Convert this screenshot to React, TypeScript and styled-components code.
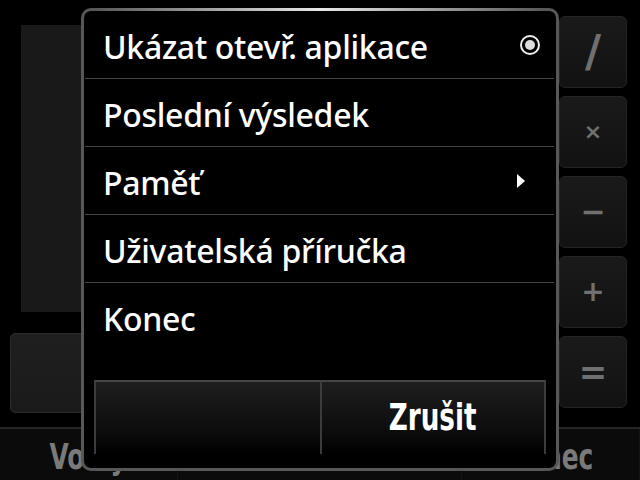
import styled, { createGlobalStyle } from 'styled-components';

const GlobalStyle = createGlobalStyle`
  html, body {
    margin: 0;
    padding: 0;
    background: #000;
  }
  * {
    box-sizing: border-box;
  }
`;

const Screen = styled.div`
  position: relative;
  width: 640px;
  height: 480px;
  overflow: hidden;
  background: #000;
  display: flex;
  flex-direction: column;
  font-family: "Noto Sans", "Open Sans", sans-serif;
`;

const Main = styled.div`
  flex: 1;
  display: flex;
`;

const LeftArea = styled.div`
  flex: 1;
  display: flex;
  flex-direction: column;
`;

const Display = styled.div`
  margin: 25px 20px 0 21px;
  height: 287px;
  background: #191919;
`;

const InputBox = styled.div`
  margin: 21px 20px 0 10px;
  height: 80px;
  border-radius: 5px;
  background: linear-gradient(#1f1f1f, #1a1a1a);
  border: 1px solid #2b2b2b;
`;

const OpsColumn = styled.div`
  display: flex;
  flex-direction: column;
  gap: 8px;
  padding-top: 16px;
  margin-right: 13px;
`;

const OpKey = styled.div<{ $size: number }>`
  width: 68px;
  height: 72px;
  border-radius: 6px;
  background: linear-gradient(#1a1a1a, #121212);
  border: 1px solid #242424;
  display: flex;
  align-items: center;
  justify-content: center;
  color: #707070;
  font-family: "DejaVu Sans", sans-serif;
  font-weight: bold;
  font-size: ${p => p.$size}px;
  line-height: 1;
`;

// the phone uses a narrow bold face for softkeys; squeeze a bold sans to match
const Narrow = styled.span`
  display: inline-block;
  transform: scaleX(0.69);
  font-family: "DejaVu Sans", sans-serif;
  font-weight: bold;
`;

const SoftkeyBar = styled.div`
  height: 53px;
  display: grid;
  grid-template-columns: 178px 1fr 178px;
  background: #0b0b0b;
  border-top: 2px solid #262626;
`;

const Softkey = styled.div`
  display: flex;
  align-items: center;
  justify-content: center;
  color: #7a7a7a;
  font-size: 36px;
  padding-top: 4px;
  border-right: 1px solid #151515;
`;

const Dialog = styled.div`
  position: absolute;
  left: 81px;
  top: 8px;
  width: 478px;
  height: 463px;
  border: 3px solid #575757;
  border-radius: 10px;
  background: #000;
  display: flex;
  flex-direction: column;

  &::before {
    content: "";
    position: absolute;
    top: -3px;
    left: 10px;
    right: 10px;
    height: 3px;
    background: linear-gradient(90deg, #575757, #e8e8e8 50%, #575757);
  }
`;

const MenuRow = styled.div<{ $last?: boolean }>`
  height: 68px;
  margin: 0 2px 0 1px;
  padding-left: 18px;
  display: flex;
  align-items: center;
  border-bottom: 1px solid ${p => (p.$last ? 'transparent' : '#444')};
  color: #fff;
  font-size: 32px;
  font-weight: 500;
  letter-spacing: -0.3px;
`;

const RowLabel = styled.span`
  flex: 1;
  padding-top: 3px;
`;

const Radio = styled.span`
  width: 20px;
  height: 20px;
  margin-right: 14px;
  border-radius: 50%;
  border: 2px solid #eee;
  display: flex;
  align-items: center;
  justify-content: center;

  &::after {
    content: "";
    width: 10px;
    height: 10px;
    border-radius: 50%;
    background: #ddd;
  }
`;

const Arrow = styled.span`
  width: 0;
  height: 0;
  margin-right: 29px;
  border-top: 7px solid transparent;
  border-bottom: 7px solid transparent;
  border-left: 8px solid #fff;
`;

const ButtonRow = styled.div`
  margin: 29px 10px 0 10px;
  height: 74px;
  display: grid;
  grid-template-columns: 1fr 1fr;
`;

const DialogButton = styled.div`
  display: flex;
  align-items: center;
  justify-content: center;
  background: linear-gradient(#1e1e1e, #0c0c0c 70%, #000);
  border-top: 2px solid #464646;
  border-left: 2px solid #3c3c3c;
  color: #fff;
  font-size: 38px;
  padding-bottom: 2px;

  &:last-child {
    border-right: 2px solid #3c3c3c;
  }
`;

const items = [
  { label: 'Ukázat otevř. aplikace', trail: 'radio' },
  { label: 'Poslední výsledek' },
  { label: 'Paměť', trail: 'arrow' },
  { label: 'Uživatelská příručka' },
  { label: 'Konec' },
];

const ops = [
  { s: '/', size: 44 },
  { s: '×', size: 22 },
  { s: '−', size: 30 },
  { s: '+', size: 28 },
  { s: '=', size: 34 },
];

const App = (): JSX.Element => {
  return (
    <Screen>
      <GlobalStyle />
      <Main>
        <LeftArea>
          <Display />
          <InputBox />
        </LeftArea>
        <OpsColumn>
          {ops.map(o => (
            <OpKey key={o.s} $size={o.size}>{o.s}</OpKey>
          ))}
        </OpsColumn>
      </Main>
      <SoftkeyBar>
        <Softkey><Narrow>Volby</Narrow></Softkey>
        <Softkey />
        <Softkey><Narrow>Konec</Narrow></Softkey>
      </SoftkeyBar>

      <Dialog>
        {items.map((it, i) => (
          <MenuRow key={it.label} $last={i === items.length - 1}>
            <RowLabel>{it.label}</RowLabel>
            {it.trail === 'radio' && <Radio />}
            {it.trail === 'arrow' && <Arrow />}
          </MenuRow>
        ))}
        <ButtonRow>
          <DialogButton />
          <DialogButton><Narrow>Zrušit</Narrow></DialogButton>
        </ButtonRow>
      </Dialog>
    </Screen>
  );
};

export default App;
